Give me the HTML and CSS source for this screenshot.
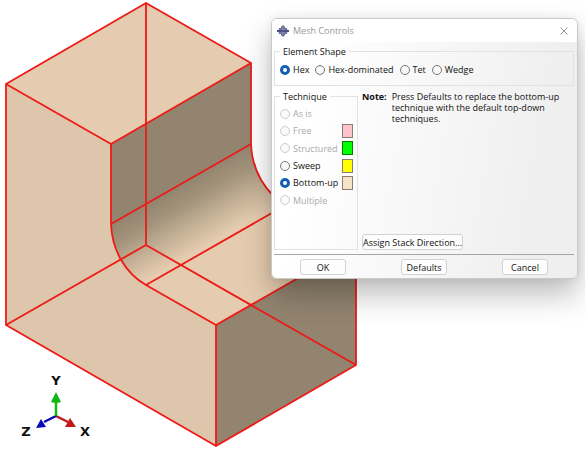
FILE: index.html
```html
<!DOCTYPE html>
<html lang="en">
<head>
<meta charset="utf-8">
<meta name="viewport" content="width=device-width, initial-scale=1">
<title>Mesh Controls</title>
<link rel="stylesheet" href="styles.css">
</head>
<body>
<main class="viewport">
  <svg class="model" viewBox="0 0 585 450" role="img" aria-label="Part with hidden edges shown">
    <defs>
      <linearGradient id="fillet" gradientUnits="userSpaceOnUse" x1="181" y1="184" x2="214" y2="241">
        <stop offset="0" stop-color="#92846f"/>
        <stop offset="0.3" stop-color="#a3937c"/>
        <stop offset="0.65" stop-color="#c5b196"/>
        <stop offset="1" stop-color="#e5ccb0"/>
      </linearGradient>
    </defs>
    <path fill="#ddc6ab" d="M6 84 111 144V224Q113 264 146 285L216 325V446L6 325Z"/>
    <path fill="#e5ccb0" d="M146 3 251 63 111 144 6 84Z"/>
    <path fill="#92846f" d="M251 63V144L111 224V144Z"/>
    <path fill="url(#fillet)" d="M251 144Q253 184 286 205L146 285Q113 264 111 224Z"/>
    <path fill="#e5ccb0" d="M286 205 356 245 216 325 146 285Z"/>
    <path fill="#92846f" d="M356 245V365L216 446V325Z"/>
    <g class="edges">
      <path d="M6 84 146 3 251 63 111 144ZV325L216 446 356 365V245L216 325V446"/>
      <path d="M111 144V224C112 250 125 273 146 285L216 325M251 63V144C252 170 265 193 286 205L356 245"/>
      <path d="M111 224 251 144M146 285 286 205"/>
      <path d="M146 3V245L6 325M146 245 356 365"/>
    </g>
    <g class="triad">
      <path stroke="#c01818" stroke-width="2.5" d="M56 416 68 422"/>
      <path fill="#c01818" d="M70 418 76 427 65 427Z"/>
      <path stroke="#0808b8" stroke-width="2.5" d="M56 416 44 422"/>
      <path fill="#0808b8" d="M41 419 36 428 46 427Z"/>
      <path stroke="#12b812" stroke-width="2.5" d="M56 416V401"/>
      <path fill="#12b812" d="M56 392 61 402Q56 404 51 402Z"/>
      <text x="56" y="385">Y</text>
      <text x="26" y="436">Z</text>
      <text x="85" y="436">X</text>
    </g>
  </svg>

  <form class="dialog" aria-labelledby="title">
    <header class="titlebar">
      <svg class="logo" viewBox="0 0 12 12" aria-hidden="true">
        <path fill="#555a8b" d="M4 2 6 0 8 2V3H10V5H12V7H10V9H8V10L6 12 4 10V9H2V7H0V5H2V3H4Z"/>
        <path stroke="#a9acc8" stroke-width=".7" d="M6 0V12M1 4H11M1 8H11"/>
        <path stroke="#3f4478" d="M0 6H12"/>
      </svg>
      <h1 class="title" id="title">Mesh Controls</h1>
      <button class="close" type="button" aria-label="Close">
        <svg viewBox="0 0 8 8" aria-hidden="true"><path d="M.5 .5 7.5 7.5M7.5 .5 .5 7.5"/></svg>
      </button>
    </header>
    <div class="content">
      <fieldset class="group">
        <legend>Element Shape</legend>
        <div class="shapes">
          <label class="choice"><input type="radio" name="shape" checked>Hex</label>
          <label class="choice"><input type="radio" name="shape">Hex-dominated</label>
          <label class="choice"><input type="radio" name="shape">Tet</label>
          <label class="choice"><input type="radio" name="shape">Wedge</label>
        </div>
      </fieldset>
      <div class="columns">
        <fieldset class="group">
          <legend>Technique</legend>
          <div class="methods">
            <label class="choice"><input type="radio" name="technique" disabled>As is</label>
            <label class="choice"><input type="radio" name="technique" disabled>Free<span class="swatch pink"></span></label>
            <label class="choice"><input type="radio" name="technique" disabled>Structured<span class="swatch green"></span></label>
            <label class="choice"><input type="radio" name="technique">Sweep<span class="swatch yellow"></span></label>
            <label class="choice"><input type="radio" name="technique" checked>Bottom-up<span class="swatch tan"></span></label>
            <label class="choice"><input type="radio" name="technique" disabled>Multiple</label>
          </div>
        </fieldset>
        <div class="details">
          <div class="note">
            <strong>Note:</strong>
            <p>Press Defaults to replace the bottom-up technique with the default top-down techniques.</p>
          </div>
          <button class="button assign" type="button">Assign Stack Direction...</button>
        </div>
      </div>
      <footer class="actions">
        <button class="button" type="button">OK</button>
        <button class="button" type="button">Defaults</button>
        <button class="button" type="button">Cancel</button>
      </footer>
    </div>
  </form>
</main>
</body>
</html>
```
FILE: styles.css
```css
* {
  box-sizing: border-box;
}

body {
  margin: 0;
  background: #fff;
  color: #111;
  font: 9px/11px "Open Sans", "Noto Sans", sans-serif;
}

.viewport {
  position: relative;
  overflow: hidden;
}

.model {
  display: block;
  width: 100%;
}

.edges {
  fill: none;
  stroke: #ee1a16;
  stroke-width: 1.8;
  stroke-linejoin: round;
}

.triad text {
  fill: #111;
  font: bold 13px "DejaVu Sans", sans-serif;
  text-anchor: middle;
}

.dialog {
  position: absolute;
  top: 18px;
  left: 271px;
  width: 307px;
  border: 1px solid #c9c9c9;
  border-radius: 6px;
  background: linear-gradient(100deg, #fff 15%, #f7f7f7 50%, #efefef 85%);
  box-shadow: 0 16px 30px rgba(0, 0, 0, 0.26), 0 0 10px rgba(0, 0, 0, 0.08);
}

.titlebar {
  display: flex;
  align-items: center;
  gap: 4px;
  height: 23px;
  padding: 0 9px 0 5px;
  border-radius: 5px 5px 0 0;
  background: #fff;
}

.logo {
  width: 12px;
  height: 12px;
}

.title {
  flex: 1;
  margin: 0;
  color: #999;
  font-size: 9px;
  font-weight: 400;
}

.close {
  display: flex;
  padding: 0;
  border: 0;
  background: none;
}

.close svg {
  width: 8px;
  height: 8px;
  stroke: #999;
}

.content {
  padding: 4px 3px 3px 2px;
}

.group {
  min-width: 0;
  margin: 0;
  padding: 0 4px 0 5px;
  border: 1px solid #e2e2e2;
}

.group legend {
  padding: 0 3px;
}

.shapes {
  display: flex;
  gap: 6px;
  padding: 7px 0 10px;
}

.choice {
  display: flex;
  align-items: center;
  gap: 3px;
  white-space: nowrap;
}

.choice input {
  flex: none;
  appearance: none;
  width: 10px;
  height: 10px;
  margin: 0;
  border: 1px solid #777;
  border-radius: 50%;
  background: #fafafa;
}

.choice input:checked {
  border: 3px solid #145fb4;
  background: #fff;
}

.choice input:disabled {
  border-color: #ccc;
}

.choice:has(input:disabled) {
  color: #aaa;
}

.columns {
  display: grid;
  grid-template-columns: 84px 1fr;
  gap: 4px;
  margin-top: 5px;
}

.methods {
  display: grid;
  grid-template-rows: repeat(6, 1fr);
  height: 104px;
  margin: 3px 0 40px;
}

.swatch {
  width: 11px;
  height: 14px;
  margin-left: auto;
  border: 1px solid #8c7d70;
}

.pink {
  background: #ffc4cb;
}

.green {
  border-color: #0a7a0a;
  background: #0f0;
}

.yellow {
  background: #ff0;
}

.tan {
  background: #f5e4c8;
}

.details {
  display: flex;
  flex-direction: column;
  align-items: flex-start;
  justify-content: space-between;
}

.note {
  display: flex;
  gap: 5px;
}

.note p {
  max-width: 172px;
  margin: 0;
}

.button {
  width: 46px;
  height: 16px;
  padding: 0;
  border: 1px solid #d2d2d2;
  border-radius: 3px;
  background: #fdfdfd;
  color: inherit;
  font: inherit;
  white-space: nowrap;
}

.assign {
  width: 101px;
}

.actions {
  display: flex;
  justify-content: space-between;
  margin-top: 4px;
  padding: 4px 26px 0;
  border-top: 1px solid #a5a5a5;
}
```
